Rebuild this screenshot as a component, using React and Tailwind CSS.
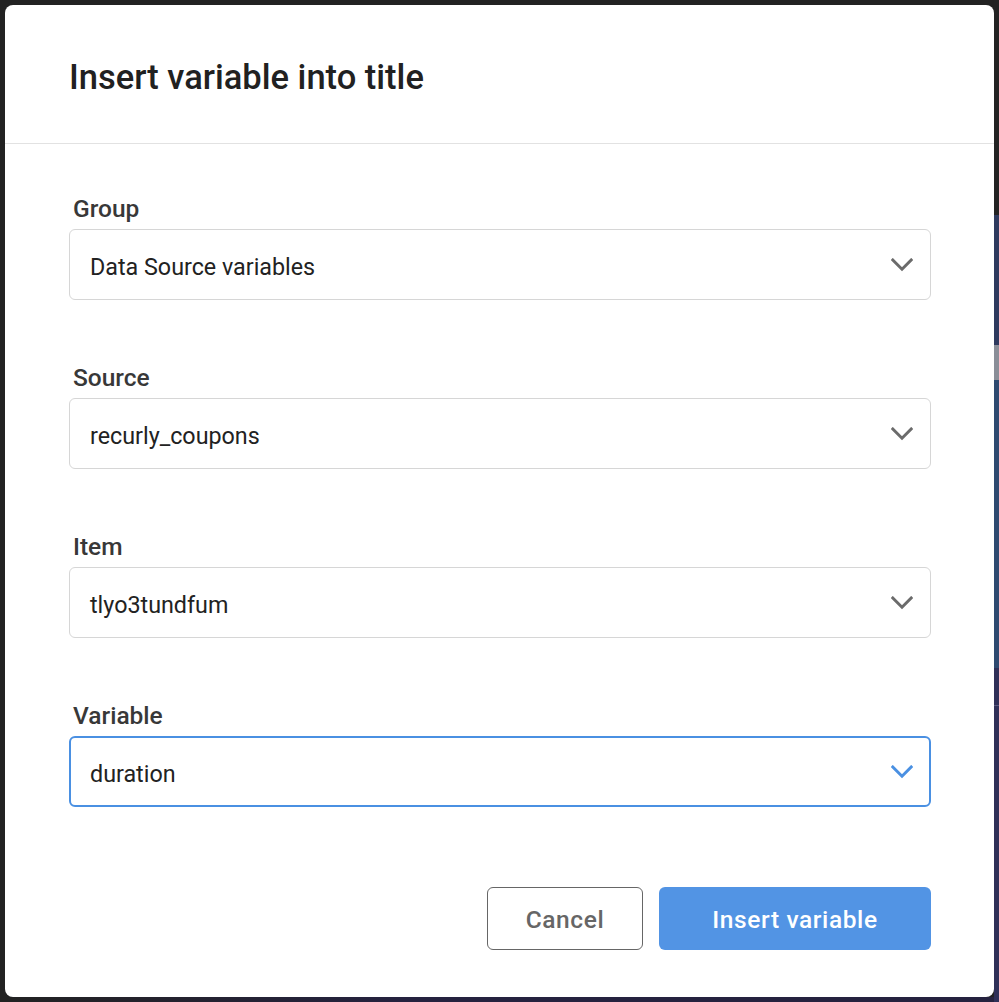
const fields = [
  { label: "Group", value: "Data Source variables" },
  { label: "Source", value: "recurly_coupons" },
  { label: "Item", value: "tlyo3tundfum" },
  { label: "Variable", value: "duration", focused: true },
];

function Chevron({ color }) {
  return (
    <svg width="22" height="14" viewBox="0 0 22 14" fill="none">
      <polyline
        points="1.8,2 11,11.2 20.2,2"
        stroke={color}
        strokeWidth="3"
        strokeLinecap="square"
        strokeLinejoin="miter"
      />
    </svg>
  );
}

function SelectField({ label, value, focused }) {
  return (
    <div>
      <div className="h-7 leading-7 pl-1 text-[24.5px] font-medium text-[#383838]">
        {label}
      </div>
      <div
        className={
          focused
            ? "mt-[6px] h-[71px] rounded-md border-2 border-[#4a90e2] flex items-center justify-between pl-[19px] pr-[16px]"
            : "mt-[6px] h-[71px] rounded-md border border-[#d6d6d6] flex items-center justify-between pl-5 pr-[17px]"
        }
      >
        <span className="text-[23.3px] text-[#222] pt-[5px]">{value}</span>
        <Chevron color={focused ? "#4a90e2" : "#6b6b6b"} />
      </div>
    </div>
  );
}

export default function App() {
  return (
    <div
      className="w-[999px] h-[1002px] bg-[#222] flex overflow-hidden"
      style={{ fontFamily: "Roboto, 'Noto Sans', sans-serif" }}
    >
      <div className="flex-1 flex flex-col pt-[5px] pl-[5px]">
        <div className="h-[992px] bg-white rounded-lg flex flex-col">
          {/* header */}
          <div className="h-[139px] border-b border-[#e2e2e2] flex items-center pl-16">
            <h1 className="text-[34.5px] font-medium text-[#212121] pt-[8px]">
              Insert variable into title
            </h1>
          </div>

          {/* body */}
          <div className="pl-16 pr-[63px] pt-[51px] flex flex-col gap-[64px]">
            {fields.map((f) => (
              <SelectField key={f.label} {...f} />
            ))}
          </div>

          {/* footer */}
          <div className="pl-16 pr-[63px] mt-20 flex justify-end gap-4">
            <button className="w-[156px] h-[63px] pt-[3px] rounded-md border border-[#666] text-[24.5px] font-medium text-[#666] tracking-wide">
              Cancel
            </button>
            <button className="w-[272px] h-[63px] pt-[3px] rounded-md bg-[#5294e4] text-[24.5px] font-medium text-white tracking-wide">
              Insert variable
            </button>
          </div>
        </div>
        <div className="flex-1 bg-[linear-gradient(to_right,#222,#25223f_40%)]" />
      </div>

      {/* backdrop strip on the right */}
      <div className="w-[5px] flex flex-col">
        <div className="h-[215px] bg-[#232323]" />
        <div className="h-[130px] bg-[#2e3a5e]" />
        <div className="h-[35px] bg-[#8a8e98]" />
        <div className="h-[288px] bg-[#2e4a70]" />
        <div className="h-[37px] bg-[#2f3058]" />
        <div className="h-px bg-[#5a5a80]" />
        <div className="flex-1 bg-[#2f3058]" />
      </div>
    </div>
  );
}
